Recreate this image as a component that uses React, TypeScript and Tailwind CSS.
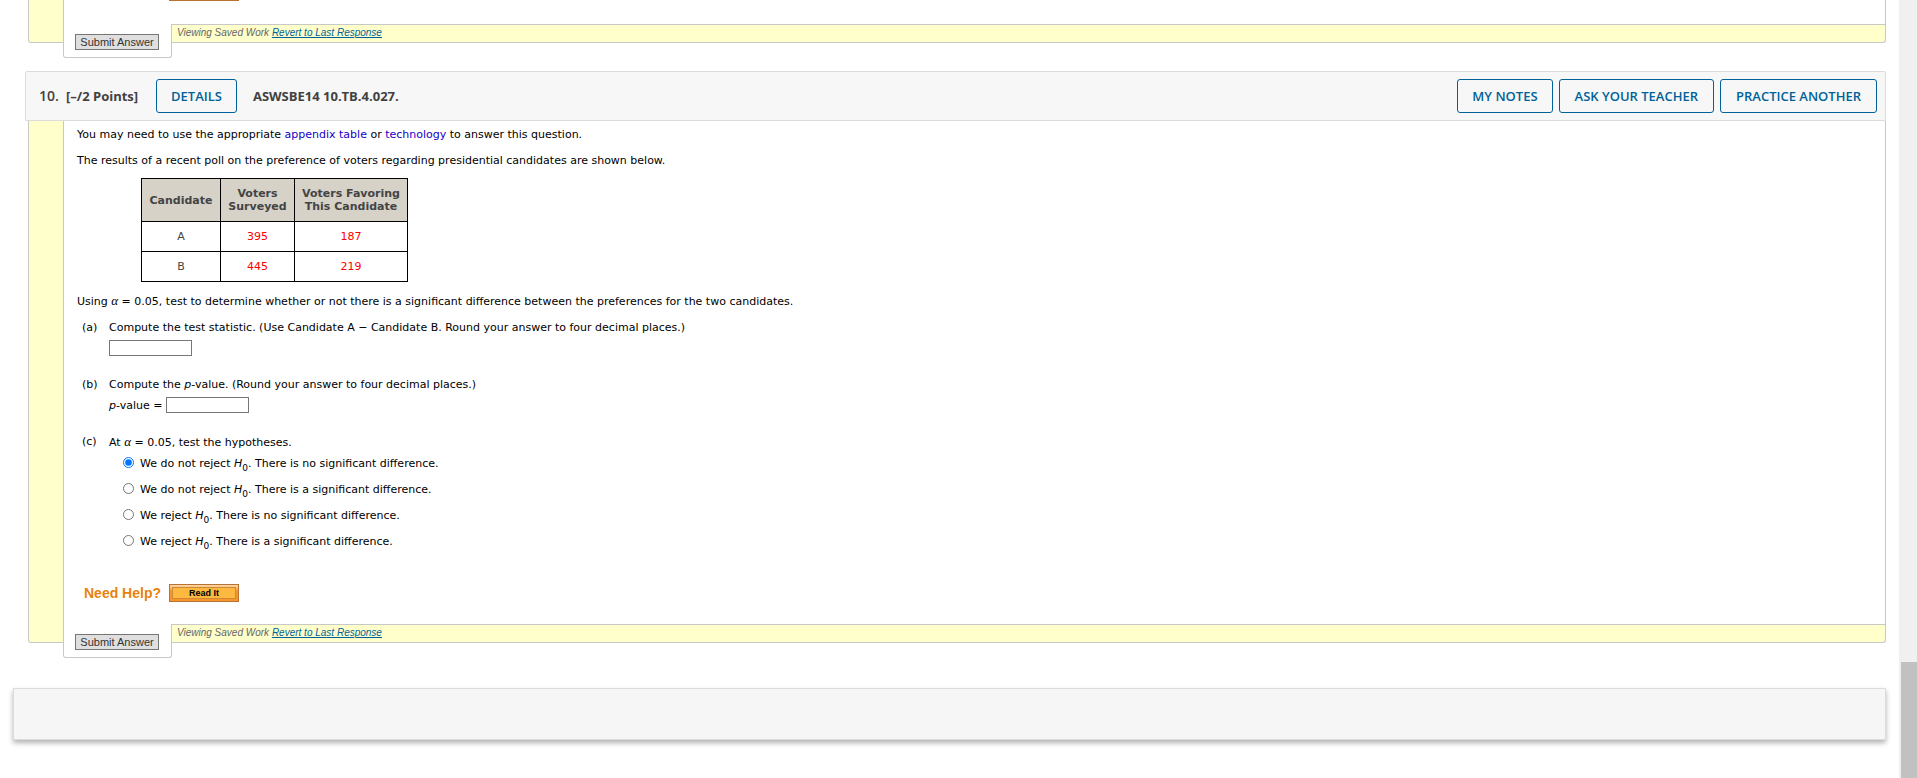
import type { ReactNode } from "react";

const voters = [
  { candidate: "A", surveyed: 395, favoring: 187 },
  { candidate: "B", surveyed: 445, favoring: 219 },
];

const hypotheses = [
  { id: "h1", verdict: "We do not reject", rest: "There is no significant difference." },
  { id: "h2", verdict: "We do not reject", rest: "There is a significant difference." },
  { id: "h3", verdict: "We reject", rest: "There is no significant difference." },
  { id: "h4", verdict: "We reject", rest: "There is a significant difference." },
];

function HeaderButton({ children, wide }: { children: ReactNode; wide?: boolean }) {
  return (
    <button
      className={`h-[34px] rounded-[3px] border border-[#006298] text-[13px] font-semibold text-[#006298] ${wide ? "px-[15px]" : "px-[14px]"}`}
    >
      {children}
    </button>
  );
}

/** Yellow gutter around the question body, with the submit tab hanging off its bottom edge. */
function QuestionBox({ children }: { children: ReactNode }) {
  return (
    <div className="ml-[3px] flex rounded-b-[3px] border border-t-0 border-[#c8c8c8] bg-[#ffffcc]">
      <div className="w-[34px] shrink-0" />
      <div className="min-w-0 flex-1">
        <div className="border-l border-[#c8c8c8] bg-white">{children}</div>
        <div className="flex items-start font-['Liberation_Sans',Arial,sans-serif]">
          <div className="-mb-4 h-[34px] w-[109px] rounded-b-[3px] border border-t-0 border-[#c8c8c8] bg-white pt-[10px] pl-[11px]">
            <button className="flex h-4 w-[84px] items-center justify-center border border-[#767676] bg-[#dfdfdf] text-[11px] whitespace-nowrap text-[#333]">
              Submit Answer
            </button>
          </div>
          <div className="-ml-px h-[18px] flex-1 border-t border-[#c8c8c8] pl-[6px] text-[10px] leading-4 text-[#666] italic">
            Viewing Saved Work{" "}
            <a href="#revert" className="text-[#006298] underline">
              Revert to Last Response
            </a>
          </div>
        </div>
      </div>
    </div>
  );
}

function Part({ label, children }: { label: string; children: ReactNode }) {
  return (
    <div className="flex">
      <div className="w-[27px] shrink-0">({label})</div>
      <div>{children}</div>
    </div>
  );
}

function Alpha() {
  return <i className="font-['Liberation_Serif',serif] text-[13px] leading-[13px]">α</i>;
}

export default function App() {
  const answerInput = "h-4 w-[83px] border border-[#767676] bg-white px-1";
  const th = "border border-black font-bold";
  const td = "border border-black";

  return (
    <div className="flex h-screen overflow-hidden bg-white font-['DejaVu_Sans',Verdana,sans-serif] text-[11px] leading-[13px] text-black">
      <main className="min-w-0 flex-1 pr-[13px] pl-[25px]">
        <QuestionBox>
          <div className="h-6 pl-[105px]">
            <div className="h-px w-[70px] bg-[#b87333]" />
          </div>
        </QuestionBox>

        <header className="mt-7 flex h-[50px] items-center rounded-t-[2px] border border-[#dcdcdc] bg-[#f7f7f7] pr-2 pl-[13px] font-['Open_Sans',sans-serif] text-[13px] leading-4 text-[#414141]">
          <span className="w-[27px] text-[14px] font-semibold">10.</span>
          <span className="w-[90px] font-bold">[–/2 Points]</span>
          <HeaderButton>DETAILS</HeaderButton>
          <span className="ml-4 font-bold">ASWSBE14 10.TB.4.027.</span>
          <div className="ml-auto flex gap-[6px]">
            <HeaderButton>MY NOTES</HeaderButton>
            <HeaderButton wide>ASK YOUR TEACHER</HeaderButton>
            <HeaderButton wide>PRACTICE ANOTHER</HeaderButton>
          </div>
        </header>

        <QuestionBox>
          <div className="pt-[7px] pl-[13px]">
            <p className="mb-[13px]">
              You may need to use the appropriate{" "}
              <a href="#table" className="text-[#1500c8]">appendix table</a> or{" "}
              <a href="#technology" className="text-[#1500c8]">technology</a> to answer this question.
            </p>
            <p className="mb-[11px]">
              The results of a recent poll on the preference of voters regarding presidential candidates are shown below.
            </p>

            <table className="ml-16 w-[267px] table-fixed border-collapse text-center text-[#444]">
              <colgroup>
                <col className="w-[79px]" />
                <col className="w-[74px]" />
                <col />
              </colgroup>
              <thead>
                <tr className="h-[43px] bg-[#d6d2c8] whitespace-nowrap">
                  <th className={th}>Candidate</th>
                  <th className={th}>Voters<br />Surveyed</th>
                  <th className={th}>Voters Favoring<br />This Candidate</th>
                </tr>
              </thead>
              <tbody>
                {voters.map((row) => (
                  <tr key={row.candidate} className="h-[30px]">
                    <td className={td}>{row.candidate}</td>
                    <td className={`${td} text-[#ff0000]`}>{row.surveyed}</td>
                    <td className={`${td} text-[#ff0000]`}>{row.favoring}</td>
                  </tr>
                ))}
              </tbody>
            </table>

            <p className="mt-3 mb-[13px]">
              Using <Alpha /> = 0.05, test to determine whether or not there is a significant difference between the
              preferences for the two candidates.
            </p>

            <div className="flex flex-col gap-[22px] pl-[5px]">
              <Part label="a">
                <label htmlFor="statistic" className="block">
                  Compute the test statistic. (Use Candidate A − Candidate B. Round your answer to four decimal places.)
                </label>
                <input id="statistic" type="text" className={`mt-[6px] block ${answerInput}`} />
              </Part>
              <Part label="b">
                <p>
                  Compute the <i>p</i>-value. (Round your answer to four decimal places.)
                </p>
                <div className="mt-[6px] flex h-4 items-center gap-1">
                  <label htmlFor="pvalue">
                    <i>p</i>-value =
                  </label>
                  <input id="pvalue" type="text" className={answerInput} />
                </div>
              </Part>
              <Part label="c">
                <p>
                  At <Alpha /> = 0.05, test the hypotheses.
                </p>
                <div className="mt-[2px] ml-[14px]">
                  {hypotheses.map((h, i) => (
                    <div key={h.id} className="flex h-[26px] items-start gap-[6px] pt-[6px]">
                      <input
                        id={h.id}
                        type="radio"
                        name="hypothesis"
                        defaultChecked={i === 0}
                        className="size-[11px]"
                      />
                      <label htmlFor={h.id}>
                        {h.verdict} <i>H</i>
                        <sub className="-bottom-1 text-[9px]">0</sub>. {h.rest}
                      </label>
                    </div>
                  ))}
                </div>
              </Part>
            </div>

            <div className="mt-[29px] flex h-10 items-start gap-2 pl-[7px] font-['Liberation_Sans',Arial,sans-serif]">
              <span className="text-[14px] leading-[18px] font-bold text-[#e8820c]">Need Help?</span>
              <button className="h-[18px] w-[70px] border border-[#b87333] bg-linear-to-b from-[#ffd9a8] to-[#f7942a] to-40% p-[2px]">
                <span className="flex h-full items-center justify-center border border-[#d08a35] bg-[#fdb940] text-[9px] leading-3 font-bold text-black">
                  Read It
                </span>
              </button>
            </div>
          </div>
        </QuestionBox>

        <footer className="mt-[45px] -ml-3 h-[52px] border border-[#dcdcdc] bg-[#f6f6f6] shadow-[0_3px_5px_rgba(0,0,0,0.3)]" />
      </main>

      {/* scroll track */}
      <div className="flex w-[18px] shrink-0 flex-col justify-end bg-[#f0f0f0] pl-[2px]">
        <div className="h-[116px] bg-[#c1c1c1]" />
      </div>
    </div>
  );
}
